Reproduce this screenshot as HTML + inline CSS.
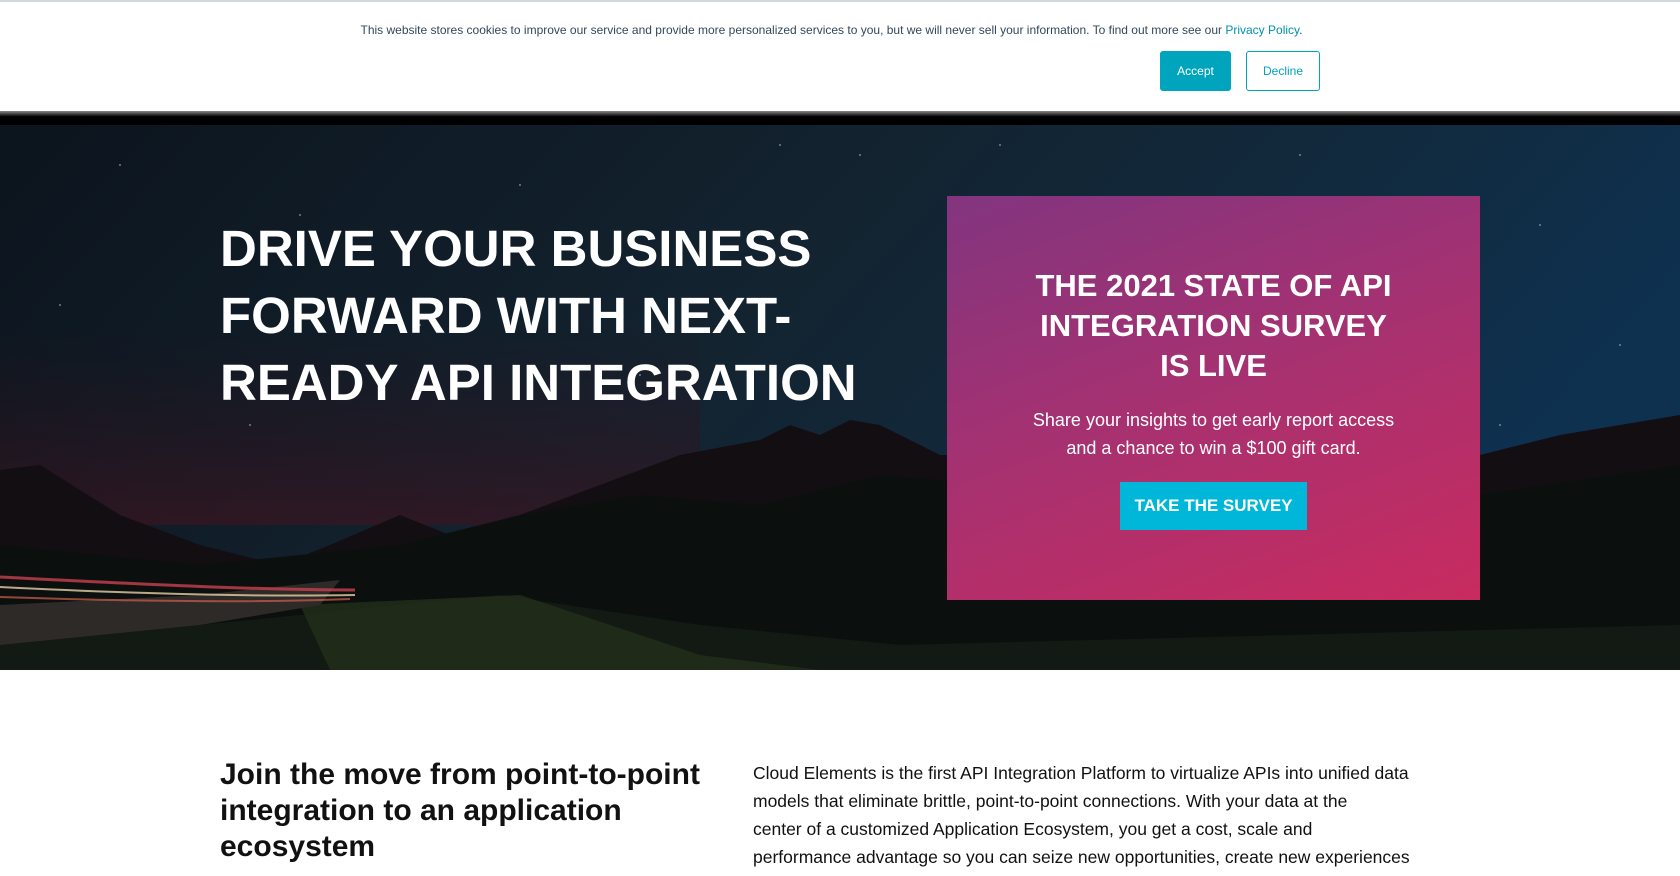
<!DOCTYPE html>
<html><head><meta charset="utf-8"><style>
*{margin:0;padding:0;box-sizing:border-box}
body{width:1680px;height:876px;overflow:hidden;background:#fff;font-family:"Liberation Sans",sans-serif;position:relative}
#cookie{position:absolute;left:0;top:0;width:1680px;height:111px;background:#fff;border-top:2px solid #cfd8e0;z-index:3}
#cookie p{position:absolute;top:21px;left:0;width:1663px;text-align:center;font-size:12px;color:#33475b}
#cookie a{color:#0091ae;text-decoration:none}
.btn{position:absolute;top:49px;height:40px;font-size:12px;border-radius:3px;display:flex;align-items:center;justify-content:center}
#acc{left:1160px;width:71px;background:#00a4bd;color:#fff}
#dec{left:1246px;width:74px;border:1px solid #00a4bd;color:#00a4bd;background:#fff}
#shadow{position:absolute;top:111px;left:0;width:1680px;height:14px;background:linear-gradient(#888,#000 40%,#000);z-index:2}
#hero{position:absolute;top:125px;left:0;width:1680px;height:545px;overflow:hidden}
#hero svg{position:absolute;left:0;top:0}
h1{position:absolute;left:220px;top:90px;color:#fff;font-size:51px;line-height:67px;font-weight:700;z-index:1}
#box{position:absolute;left:947px;top:71px;width:533px;height:404px;background:linear-gradient(160deg,#82357f 0%,#a83170 50%,#c82b5f 100%);text-align:center;color:#fff}
#box h2{margin-top:70px;font-size:31px;line-height:40px;font-weight:700}
#box p{margin-top:20px;font-size:18px;line-height:28px}
#box .sv{display:inline-block;margin-top:20px;width:187px;height:48px;line-height:48px;background:#00b7d9;font-weight:700;font-size:17px}
h3{position:absolute;left:220px;top:757px;font-size:30px;line-height:36px;font-weight:700;color:#111}
#para{position:absolute;left:753px;top:759px;width:760px;font-size:17.5px;line-height:28px;color:#111}
</style></head><body>
<div id="cookie"><p>This website stores cookies to improve our service and provide more personalized services to you, but we will never sell your information. To find out more see our <a>Privacy Policy</a>.</p>
<div class="btn" id="acc">Accept</div><div class="btn" id="dec">Decline</div></div>
<div id="shadow"></div>
<div id="hero">
<svg width="1680" height="545" viewBox="0 0 1680 545">
<defs>
<linearGradient id="sky" x1="0" y1="0" x2="1" y2="0.3">
<stop offset="0" stop-color="#0c141d"/><stop offset="0.5" stop-color="#132330"/><stop offset="0.8" stop-color="#112b40"/><stop offset="1" stop-color="#0e3150"/></linearGradient>
<linearGradient id="glow" x1="0" y1="0" x2="0" y2="1"><stop offset="0" stop-color="#2a1018" stop-opacity="0"/><stop offset="1" stop-color="#3a1420" stop-opacity="0.7"/></linearGradient>
</defs>
<rect width="1680" height="545" fill="url(#sky)"/>
<rect y="200" width="700" height="200" fill="url(#glow)"/>
<g fill="#9cd" opacity="0.6">
<circle cx="120" cy="40" r="1"/><circle cx="300" cy="90" r="1"/><circle cx="520" cy="60" r="1"/><circle cx="700" cy="140" r="1"/><circle cx="860" cy="30" r="1"/><circle cx="60" cy="180" r="1"/><circle cx="420" cy="200" r="1"/><circle cx="640" cy="250" r="1"/><circle cx="1540" cy="100" r="1"/><circle cx="1620" cy="220" r="1"/><circle cx="1500" cy="300" r="1"/><circle cx="250" cy="300" r="1"/><circle cx="780" cy="20" r="1"/><circle cx="1000" cy="20" r="1"/><circle cx="1300" cy="30" r="1"/></g>
<path d="M0 345 L40 340 L120 390 L200 420 L280 440 L330 420 L400 390 L450 410 L520 390 L600 360 L680 330 L760 315 L790 300 L820 310 L850 295 L880 300 L940 330 L1000 330 L1480 330 L1560 310 L1620 300 L1680 290 L1680 545 L0 545Z" fill="#120e12"/>
<path d="M0 420 L200 440 L400 420 L520 390 L640 370 L760 380 L880 350 L1000 360 L1480 370 L1680 340 L1680 545 L0 545Z" fill="#0b100e"/>
<path d="M0 520 L300 490 L500 470 L700 500 L900 520 L1680 500 L1680 545 L0 545Z" fill="#131a13"/>
<path d="M300 480 L520 470 L700 530 L820 545 L330 545Z" fill="#232e1a" opacity="0.8"/>
<path d="M0 535 L0 480 L200 470 L340 455 L320 480 L200 500 L0 520Z" fill="#2e2a27"/>
<path d="M0 452 C120 458 250 465 355 465" stroke="#c8404f" stroke-width="3" fill="none" opacity="0.8"/>
<path d="M0 462 C120 468 250 472 355 470" stroke="#e6cfa8" stroke-width="2" fill="none" opacity="0.8"/>
<path d="M0 472 C120 476 250 478 350 474" stroke="#d0604f" stroke-width="2" fill="none" opacity="0.7"/>
</svg>
<h1>DRIVE YOUR BUSINESS<br>FORWARD WITH NEXT-<br>READY API INTEGRATION</h1>
<div id="box"><h2>THE 2021 STATE OF API<br>INTEGRATION SURVEY<br>IS LIVE</h2>
<p>Share your insights to get early report access<br>and a chance to win a $100 gift card.</p>
<div class="sv">TAKE THE SURVEY</div></div>
</div>
<h3>Join the move from point-to-point<br>integration to an application<br>ecosystem</h3>
<div id="para">Cloud Elements is the first API Integration Platform to virtualize APIs into unified data<br>models that eliminate brittle, point-to-point connections. With your data at the<br>center of a customized Application Ecosystem, you get a cost, scale and<br>performance advantage so you can seize new opportunities, create new experiences</div>
</body></html>
